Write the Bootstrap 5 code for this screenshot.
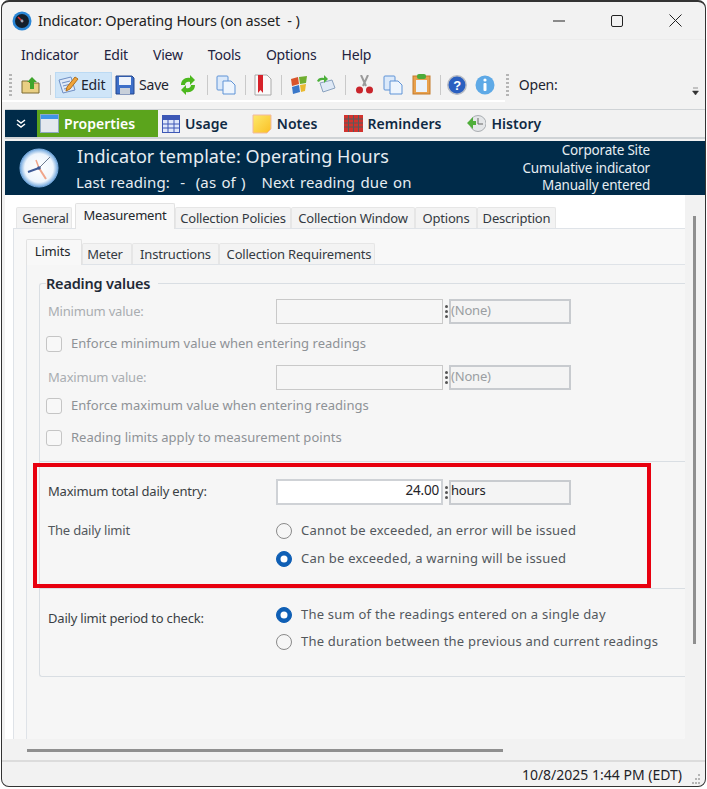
<!DOCTYPE html>
<html lang="en"><head><meta charset="utf-8"><title>Indicator</title>
<link href="https://cdn.jsdelivr.net/npm/bootstrap@5.3.0/dist/css/bootstrap.min.css" rel="stylesheet">
<style>
html,body{height:789px;overflow:hidden;background:#fff}
body{font-family:"Noto Sans","Open Sans",sans-serif;font-size:13px;color:#3a3f44;letter-spacing:-.2px}
.win{width:705px;height:787px;margin:0 0 0 1px;border:1px solid #333;border-top-width:2px;border-radius:8px;background:#f2f2f2;overflow:hidden;display:flex;flex-direction:column}
.ttl{height:37px;flex:none;padding-left:10px;font-size:14.5px;color:#222;letter-spacing:-.18px}
.ttl svg{margin-right:6px}
.wctl{margin-left:auto;padding-right:23px;gap:46px}
.wctl svg{margin-right:0}
.menub{height:30px;flex:none;padding-left:19px;gap:25px;font-size:14px;color:#23233f;border-top:1px solid #ececec}
.tbar{height:33px;flex:none;padding-left:7px;color:#1d2430;font-size:14px;position:relative;border-bottom:2px solid #fff;margin-right:200px;margin-bottom:7px}
.tbar .ic{margin-left:9px;flex:none}
.tbar .ic.m3{margin-left:3px}.tbar .ic.m8{margin-left:8px}.tbar .ic.m7{margin-left:7px}.tbar .ic.m6{margin-left:6px}
.grip{width:3px;height:22px;flex:none;background:repeating-linear-gradient(#b5b5b5 0 2px,transparent 2px 4px)}
.gr2{margin-left:11px}
.tsep{width:1px;height:20px;background:#c9c9c9;margin-left:9px;flex:none}
.tedit{background:#cfe5f8;border:1px solid #bcdaf3;height:26px;width:57px;margin-left:4px;gap:2px;padding-left:1px;flex:none}
.topen{margin-left:10px;white-space:nowrap}
.ovf{position:absolute;left:690px;top:18px}
.mods{height:30px;flex:none;margin-left:3px;border:solid #cfd3d6;border-width:1px 0 2px;font-weight:600;font-size:14px;letter-spacing:.05px;color:#0f2a44;background:#f2f2f2}
.chev{width:32px;height:100%;background:#002b49}
.mprop{width:121px;height:100%;background:#5ba41c;color:#fff;padding-left:3px;gap:5px}
.mitem{gap:5px}
.mi1{margin-left:4px}.mi2{margin-left:24px}.mi3{margin-left:26px}.mi4{margin-left:26px}
.hdr{height:54px;flex:none;margin:2px 0 0 3px;background:#002b49;color:#e6edf2;padding:0 55px 0 14px}
.hclk{margin-right:18px;flex:none}
.h1x{font-size:18px;line-height:26px;letter-spacing:.1px}
.h2x{font-size:15px;line-height:22px;letter-spacing:.12px;word-spacing:1.2px;margin-top:2px;margin-left:-1px}
.hsp{margin-left:auto;text-align:right;font-size:13.5px;line-height:17.5px;padding-top:1px}
.hmid{flex:1}
.lower{flex:1;min-height:0;position:relative;display:flex;flex-direction:column}
.sarea{width:680px;height:544px;margin-left:3px;background:#fff;overflow:hidden;border-radius:0 0 3px 0;flex:none;padding-top:8px}
.tabs1,.tabs2{flex-wrap:nowrap;border:0;height:25px;align-items:flex-end;white-space:nowrap}
.tabs1{padding-left:11px}
.tabs2{padding-left:0;margin-top:10px}
.tabs1 .nav-link,.tabs2 .nav-link{padding:0;margin:0;height:21px;line-height:20px;color:#333a42;text-align:center;background:#f3f3f3;border:1px solid #e6e6e6;border-bottom:0;border-radius:2px 2px 0 0;font-size:13px}
.tabs1 .nav-link.active,.tabs2 .nav-link.active{height:26px;background:#f8f8f8;color:#23272c;line-height:22px;position:relative;top:1px;border-color:#e2e2e2}
.tabs2 .nav-link{line-height:21px}
.tabs2 .nav-link.active{line-height:23px}
.w56{width:56px}.w100{width:100px;margin-left:3px!important}.w116{width:116px}.w124{width:124px}.w62{width:62px}.w79{width:79px}
.w50{width:50px}.w87{width:87px}.w156{width:156px}
.pl3{padding-left:3px!important}.pr3{padding-right:3px!important}.pr4{padding-right:4px!important}.pl4{padding-left:4px!important}
.p1{margin-left:8px;border:solid #dfe3e8;border-width:1px 0 0 1px;background:#f8f8f8;height:520px;padding-left:12px}
.p2{border:solid #dfe3e8;border-width:1px 0 0 1px;background:#f6f6f6;height:480px;padding-left:12px}
fieldset.grp{border:solid #d9dee3;border-width:1.5px 0 1.5px 1.5px;border-radius:3px 0 0 3px;margin:9px 0 0;padding:0 0 25px 8px;height:403px;min-width:0}
.grp legend{float:none;width:auto;margin:0 0 0 -2px;padding:0 8px 0 0;font-size:14.5px;font-weight:600;line-height:18px;color:#1f2a36}
.frow{height:25px;gap:0}
.flab{width:228px;flex:none}
.dis{color:#a9adb1}
.fbox{width:167px;height:100%;border:1px solid #c9c9c9;background:#f6f6f6;text-align:right;padding-right:2px;line-height:23px;color:#1f2328}
.fbox.on{background:#fff;border-width:2px;border-color:#cfd2d6;line-height:18px;font-size:13.5px}
.dots{width:6px;margin-left:0;flex:none;display:flex;flex-direction:column;justify-content:center;align-items:center;gap:2px}
.dots i{width:3px;height:3px;border-radius:50%;background:#555;display:block}
.unit{width:122px;height:25px;border:2px solid #c8cbcf;background:#f4f4f4;line-height:19px;padding-left:0;font-size:13px;color:#9a9ea2}
.unit.on{color:#1c2228;line-height:17px}
.chk{height:20px;gap:9px;margin-left:-2px;color:#8e9296;letter-spacing:.02px}
.chk .form-check-input,.rad .form-check-input{margin:0;flex:none;float:none;opacity:1;border:1.5px solid #c5c5c5;background-color:#f8f8f8;width:16px;height:16px;box-shadow:none}
.chk .form-check-input{border-radius:3px}
.rad .form-check-input{border-color:#8a8a8a;background-color:#f6f6f6}
.rad .form-check-input:checked{background-color:#0f5fb5;border-color:#0f5fb5}
.rad{height:20px;gap:9px;color:#53585d;letter-spacing:.22px}
.flab.rad{letter-spacing:-.2px}
.t6{margin-top:6px}.t7{margin-top:7px}.t8{margin-top:8px}.t10{margin-top:10px}.t11{margin-top:11px}.t12{margin-top:12px}.t13{margin-top:13px}.t16{margin-top:16px}.t17{margin-top:17px}.t19{margin-top:19px}
.gsep{height:1px;background:#d9dee3;margin-left:-8px}
.tall{height:26px}
.hl{position:absolute;left:31px;top:354px;width:618px;height:125px;border:4px solid #e8000f;pointer-events:none}
.lab2{padding-top:4px}
.hscr{height:21px;flex:none;position:relative;padding:10px 0 0 25px}
.hthumb{width:476px;height:3px;background:#8f8f8f}
.vthumb{position:absolute;left:691px;top:107px;width:3px;height:428px;background:#8f8f8f}
.stat{height:26px;flex:none;border-top:2px solid #dcdcdc;justify-content:flex-end;padding-right:23px;position:relative;color:#1f2329;font-size:14px;letter-spacing:0}
.rsz{position:absolute;right:4px;bottom:1px}
</style></head><body>
<div class="win">
 <div class="ttl d-flex align-items-center">
  <svg width="20" height="20" viewBox="0 0 20 20"><circle cx="10" cy="10" r="9.500" fill="#2a86d6"/><circle cx="10" cy="10" r="7" fill="#14202c"/><path d="M6 6l5 5" stroke="#d33" stroke-width="1.600"/><circle cx="10" cy="10" r="1.400" fill="#9ab"/></svg>
  <span>Indicator: Operating Hours (on asset&nbsp; - )</span>
  <div class="wctl d-flex align-items-center">
   <svg width="12" height="12" viewBox="0 0 12 12"><path d="M0 6h12" stroke="#222" stroke-width="1"/></svg>
   <svg width="12" height="12" viewBox="0 0 12 12"><rect x=".5" y=".5" width="11" height="11" rx="1.500" fill="none" stroke="#222"/></svg>
   <svg width="13" height="13" viewBox="0 0 13 13"><path d="M.5.5l12 12M12.500.5l-12 12" stroke="#222"/></svg>
  </div>
 </div>
 <div class="menub d-flex align-items-center"><span>Indicator</span><span>Edit</span><span>View</span><span>Tools</span><span>Options</span><span>Help</span></div>
 <div class="tbar d-flex align-items-center">
  <span class="grip"></span>
  <svg class="ic" width="20" height="20" viewBox="0 0 20 20"><path d="M1 6h6l2 2h9v10H1z" fill="#e9cf83" stroke="#7d6a32"/><path d="M9 14V7H6l5-5 5 5h-3v7z" fill="#3fa52c"/></svg>
  <span class="tsep"></span>
  <div class="tedit d-flex align-items-center">
   <svg width="22" height="22" viewBox="0 0 22 22"><path d="M2 6l12-3 4 13-12 3z" fill="#dfe9f8" stroke="#6f8fc4"/><path d="M5 9l8-2M6 12l8-2M7 15l5-1" stroke="#6f8fc4"/><path d="M10 13l8-10 3 2-8 10-4 2z" fill="#f0a43a" stroke="#b0701c"/></svg>
   <span>Edit</span></div>
  <svg class="ic m3" width="20" height="20" viewBox="0 0 20 20"><path d="M1 1h16l2 2v16H1z" fill="#3d6fc9" stroke="#24478c"/><rect x="4" y="2" width="12" height="8" fill="#eef3fb"/><rect x="5" y="13" width="10" height="6" fill="#c9d0da"/></svg>
  <span class="ms-1">Save</span>
  <svg class="ic" width="20" height="22" viewBox="0 0 20 22"><path d="M3 11C3 6 7 3 12 4V1l5 5-5 5V8c-3-1-5 1-5 3z" fill="#4cb81e"/><path d="M17 11c0 5-4 8-9 7v3l-5-5 5-5v3c3 1 5-1 5-3z" fill="#4cb81e"/></svg>
  <span class="tsep"></span>
  <svg class="ic ms-2" width="20" height="20" viewBox="0 0 20 20"><rect x="1" y="1" width="11" height="14" rx="1" fill="#dbe9fa" stroke="#5f93d6"/><path d="M7 6h8l4 4v9H7z" fill="#eef5fd" stroke="#5f93d6"/></svg>
  <span class="tsep"></span>
  <svg class="ic m8" width="18" height="22" viewBox="0 0 18 22"><path d="M1 1h12l4 4v16H1z" fill="#fafafa" stroke="#aaa"/><path d="M4 1h5v18l-2.500-3L4 19z" fill="#d6222a"/></svg>
  <span class="tsep"></span>
  <svg class="ic m8" width="18" height="20" viewBox="0 0 18 20"><path d="M1 4l7-2 1 7-7 2z" fill="#d9542b"/><path d="M9 2l8-1-1 7-6 1z" fill="#6fae2f"/><path d="M2 12l7-2 1 7-7 2z" fill="#3a78c9"/><path d="M10 10l6-1-1 7-4 1z" fill="#eab92f"/></svg>
  <svg class="ic m8" width="20" height="20" viewBox="0 0 20 20"><path d="M4 8l12-3 3 8-12 4z" fill="#dfe9f6" stroke="#8aa2bf"/><path d="M1 6c1-3 4-4 7-3V0l4 4-4 4V5C6 5 4 5 3 7z" fill="#4cb03a"/></svg>
  <span class="tsep"></span>
  <svg class="ic" width="19" height="20" viewBox="0 0 19 20"><path d="M6 0l5 11M13 0L8 11" stroke="#9a9a9a" stroke-width="2"/><circle cx="4.500" cy="15" r="3.500" fill="#c9252c"/><circle cx="14.500" cy="15" r="3.500" fill="#c9252c"/></svg>
  <svg class="ic" width="20" height="20" viewBox="0 0 20 20"><rect x="1" y="1" width="11" height="14" rx="1" fill="#dbe9fa" stroke="#5f93d6"/><path d="M7 6h8l4 4v9H7z" fill="#eef5fd" stroke="#5f93d6"/></svg>
  <svg class="ic" width="19" height="21" viewBox="0 0 19 21"><rect x="1" y="2" width="17" height="18" fill="#e8a14e" stroke="#c47a2b"/><rect x="4" y="6" width="11" height="12" fill="#eaf2fb"/><rect x="5" y="0" width="9" height="5" rx="2" fill="#4cab3a"/></svg>
  <span class="tsep"></span>
  <svg class="ic m6" width="20" height="20" viewBox="0 0 20 20"><circle cx="10" cy="10" r="9.200" fill="#2a5fc0" stroke="#b8bcc4" stroke-width="1.500"/><text x="10" y="15" font-size="13" font-weight="700" text-anchor="middle" fill="#fff" font-family="Liberation Sans">?</text></svg>
  <svg class="ic m8" width="20" height="20" viewBox="0 0 20 20"><circle cx="10" cy="10" r="9.500" fill="#5ea9e6"/><circle cx="10" cy="5" r="1.600" fill="#fff"/><rect x="8.500" y="8" width="3" height="8" rx="1" fill="#fff"/></svg>
  <span class="grip gr2"></span>
  <span class="topen">Open:</span>
  <svg class="ovf" width="7" height="9" viewBox="0 0 7 9"><path d="M1 1h5M.5 4h6L3.500 8z" fill="#333" stroke="#333" stroke-width=".5"/></svg>
 </div>
 <div class="lower">
  <div class="mods d-flex align-items-center">
   <div class="chev d-flex align-items-center justify-content-center"><svg width="10" height="10" viewBox="0 0 10 10"><path d="M1 1l4 3 4-3M1 5l4 3 4-3" fill="none" stroke="#fff" stroke-width="1.500"/></svg></div>
   <div class="mprop d-flex align-items-center"><svg width="19" height="19" viewBox="0 0 19 19"><rect x=".5" y=".5" width="18" height="18" fill="#e4e8ee" stroke="#8fa9c4"/><rect x="1" y="1" width="17" height="4" fill="#3f95e6"/></svg><span>Properties</span></div>
   <div class="mitem mi1 d-flex align-items-center"><svg width="18" height="18" viewBox="0 0 18 18"><rect x=".5" y=".5" width="17" height="17" fill="#dfe7fa" stroke="#3c57b5"/><rect x="1" y="1" width="16" height="4" fill="#3c57b5"/><path d="M6 5v12M12 5v12M1 9h16M1 13h16" stroke="#3c57b5"/></svg><span>Usage</span></div>
   <div class="mitem mi2 d-flex align-items-center"><svg width="20" height="20" viewBox="0 0 20 20"><defs><linearGradient id="ng" x1="0" y1="0" x2="1" y2="1"><stop offset="0" stop-color="#fde96b"/><stop offset="1" stop-color="#fbbf24"/></linearGradient></defs><path d="M1 1h18v14l-4 4H1z" fill="url(#ng)" stroke="#f2b9a0"/></svg><span>Notes</span></div>
   <div class="mitem mi3 d-flex align-items-center"><svg width="19" height="17" viewBox="0 0 19 17"><rect width="19" height="17" fill="#d2332e"/><path d="M0 4h19M0 8h19M0 12h19M4.500 0v17M9.500 0v17M14.500 0v17" stroke="#5a5a5a"/></svg><span>Reminders</span></div>
   <div class="mitem mi4 d-flex align-items-center"><svg width="19" height="19" viewBox="0 0 19 19"><circle cx="11" cy="9.500" r="8" fill="#e4e6e8" stroke="#a9adb1"/><path d="M11 4v6h5" stroke="#666" fill="none"/><path d="M0 9l6-6v4h3v4H6v4z" fill="#4fae3a"/></svg><span>History</span></div>
  </div>
  <div class="hdr d-flex align-items-center">
   <svg class="hclk" width="40" height="40" viewBox="0 0 40 40"><defs><radialGradient id="cg"><stop offset="0" stop-color="#fff"/><stop offset=".75" stop-color="#eef5fc"/><stop offset="1" stop-color="#6fa6dd"/></radialGradient></defs><circle cx="20" cy="20" r="19" fill="url(#cg)" stroke="#7fb0e2"/><path d="M20 20L31 9" stroke="#6b7a90" stroke-width="1"/><path d="M20 20L9 24" stroke="#3e5a96" stroke-width="2"/><path d="M20 20l7 11" stroke="#f0a58a" stroke-width="2"/><path d="M20 20l-3-8" stroke="#f0a58a" stroke-width="1.500"/><circle cx="20" cy="20" r="1.800" fill="#3e5a96"/></svg>
   <div class="hmid"><div class="h1x">Indicator template: Operating Hours</div><div class="h2x">Last reading:&nbsp; -&nbsp; (as of )&nbsp;&nbsp; Next reading due on</div></div>
   <div class="hsp"><div>Corporate Site</div><div>Cumulative indicator</div><div>Manually entered</div></div>
  </div>
  <div class="sarea">
   <ul class="nav nav-tabs tabs1">
    <li class="nav-item"><a class="nav-link w56 pl3">General</a></li>
    <li class="nav-item"><a class="nav-link active w100">Measurement</a></li>
    <li class="nav-item"><a class="nav-link w116">Collection Policies</a></li>
    <li class="nav-item"><a class="nav-link w124">Collection Window</a></li>
    <li class="nav-item"><a class="nav-link w62">Options</a></li>
    <li class="nav-item"><a class="nav-link w79">Description</a></li>
   </ul>
   <div class="p1">
    <ul class="nav nav-tabs tabs2">
     <li class="nav-item"><a class="nav-link active w56 pr3">Limits</a></li>
     <li class="nav-item"><a class="nav-link w50 pr4">Meter</a></li>
     <li class="nav-item"><a class="nav-link w87">Instructions</a></li>
     <li class="nav-item"><a class="nav-link w156 pl4">Collection Requirements</a></li>
    </ul>
    <div class="p2">
     <fieldset class="grp">
      <legend>Reading values</legend>
      <div class="frow t7 d-flex align-items-center"><div class="flab dis">Minimum value:</div><div class="fbox"></div><div class="dots"><i></i><i></i><i></i></div><div class="unit">(None)</div></div>
      <div class="chk t10 d-flex align-items-center"><input class="form-check-input" type="checkbox" disabled><span>Enforce minimum value when entering readings</span></div>
      <div class="frow t11 d-flex align-items-center"><div class="flab dis">Maximum value:</div><div class="fbox"></div><div class="dots"><i></i><i></i><i></i></div><div class="unit">(None)</div></div>
      <div class="chk t6 d-flex align-items-center"><input class="form-check-input" type="checkbox" disabled><span>Enforce maximum value when entering readings</span></div>
      <div class="chk t12 d-flex align-items-center"><input class="form-check-input" type="checkbox" disabled><span>Reading limits apply to measurement points</span></div>
      <div class="gsep t13"></div>
      <div class="frow tall t17 d-flex align-items-center"><div class="flab">Maximum total daily entry:</div><div class="fbox on">24.00</div><div class="dots"><i></i><i></i><i></i></div><div class="unit on">hours</div></div>
      <div class="t16 d-flex"><div class="flab rad d-flex align-items-center">The daily limit</div><div><label class="rad d-flex align-items-center"><input class="form-check-input" type="radio" name="a"><span>Cannot be exceeded, an error will be issued</span></label><label class="rad t8 d-flex align-items-center"><input class="form-check-input" type="radio" name="a" checked><span>Can be exceeded, a warning will be issued</span></label></div></div>
      <div class="gsep t19"></div>
      <div class="t16 d-flex"><div class="flab lab2">Daily limit period to check:</div><div><label class="rad d-flex align-items-center"><input class="form-check-input" type="radio" name="b" checked><span>The sum of the readings entered on a single day</span></label><label class="rad t7 d-flex align-items-center"><input class="form-check-input" type="radio" name="b"><span>The duration between the previous and current readings</span></label></div></div>
     </fieldset>
    </div>
   </div>
  </div>
  <div class="hscr"><div class="hthumb"></div></div>
  <div class="stat d-flex align-items-center"><span>10/8/2025 1:44 PM (EDT)</span><svg class="rsz" width="12" height="12" viewBox="0 0 12 12"><path d="M9 1h2v2H9zM6 5h2v2H6zM9 5h2v2H9zM3 9h2v2H3zM6 9h2v2H6zM9 9h2v2H9z" fill="#b5b5b5"/></svg></div>
  <div class="vthumb"></div>
  <div class="hl"></div>
 </div>
</div>
<script src="https://cdn.jsdelivr.net/npm/bootstrap@5.3.0/dist/js/bootstrap.bundle.min.js"></script>
</body></html>
